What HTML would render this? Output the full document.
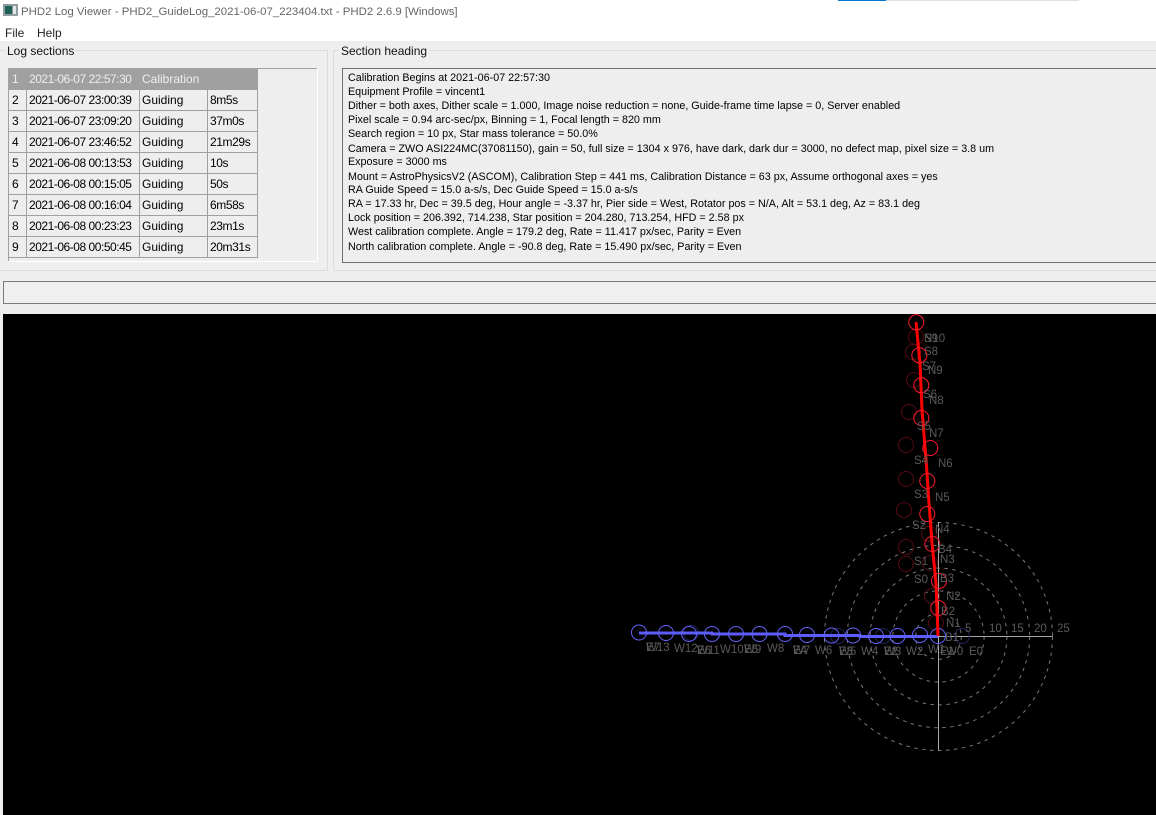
<!DOCTYPE html>
<html><head><meta charset="utf-8"><style>
html,body{margin:0;padding:0}
body{width:1156px;height:815px;position:relative;overflow:hidden;background:#fff;font-family:"Liberation Sans",sans-serif;color:#000}
.a{position:absolute;white-space:nowrap}
#bg{left:0;top:41px;width:1156px;height:774px;background:#eeeeee}
.line{position:absolute}
.cell{position:absolute;font-size:12px;line-height:21px;white-space:nowrap;color:#000;margin-top:1px}
.d{letter-spacing:-.47px}
.m{letter-spacing:-.4px}
.tx{position:absolute;left:348px;font-size:10.75px;line-height:15px;white-space:nowrap;color:#000}
svg text{font-family:"Liberation Sans",sans-serif;font-size:11.5px}
</style></head><body>
<div class="a" style="left:838px;top:0;width:48px;height:1px;background:#0078d7"></div>
<div class="a" style="left:886px;top:0;width:193px;height:1px;background:#e0e0e0"></div>
<svg class="a" style="left:3px;top:3px" width="16" height="14"><rect x="0" y="1" width="15" height="12" fill="#8f9ca0"/><rect x="2" y="3" width="7" height="8" fill="#1f5f55"/><rect x="10" y="3" width="3" height="8" fill="#dfe6e8"/></svg>
<div class="a" style="left:21px;top:4px;font-size:11.43px;line-height:16px;color:#666">PHD2 Log Viewer - PHD2_GuideLog_2021-06-07_223404.txt - PHD2 2.6.9 [Windows]</div>
<div class="a" style="left:5px;top:25px;font-size:12px;line-height:16px;color:#222">File</div>
<div class="a" style="left:37px;top:25px;font-size:12px;line-height:16px;color:#222">Help</div>
<div class="a" id="bg"></div>

<div class="line" style="left:0;top:50px;width:327px;height:1px;background:#dcdcdc"></div>
<div class="line" style="left:327px;top:50px;width:1px;height:221px;background:#dcdcdc"></div>
<div class="line" style="left:0;top:270px;width:328px;height:1px;background:#dcdcdc"></div>
<div class="line" style="left:333px;top:50px;width:823px;height:1px;background:#dcdcdc"></div>
<div class="line" style="left:333px;top:50px;width:1px;height:221px;background:#dcdcdc"></div>
<div class="line" style="left:333px;top:270px;width:823px;height:1px;background:#dcdcdc"></div>
<div class="a" style="left:5px;top:44px;padding:0 2px;background:#eee;font-size:12px;line-height:15px;color:#111">Log sections</div>
<div class="a" style="left:339px;top:44px;padding:0 2px;background:#eee;font-size:12px;line-height:15px;color:#111">Section heading</div>

<div class="line" style="left:8px;top:68px;width:309px;height:1px;background:#a0a0a0"></div>
<div class="line" style="left:8px;top:68px;width:1px;height:194px;background:#a0a0a0"></div>
<div class="line" style="left:8px;top:261px;width:310px;height:1px;background:#fff"></div>
<div class="line" style="left:317px;top:68px;width:1px;height:194px;background:#fff"></div>

<div class="line" style="left:9px;top:69px;width:249px;height:21px;background:#a0a0a0"></div>
<div class="line" style="left:26px;top:90px;width:1px;height:168px;background:#a0a0a0"></div>
<div class="line" style="left:139px;top:90px;width:1px;height:168px;background:#a0a0a0"></div>
<div class="line" style="left:207px;top:90px;width:1px;height:168px;background:#a0a0a0"></div>
<div class="line" style="left:257px;top:90px;width:1px;height:168px;background:#a0a0a0"></div>
<div class="line" style="left:9px;top:110px;width:249px;height:1px;background:#a0a0a0"></div>
<div class="line" style="left:9px;top:131px;width:249px;height:1px;background:#a0a0a0"></div>
<div class="line" style="left:9px;top:152px;width:249px;height:1px;background:#a0a0a0"></div>
<div class="line" style="left:9px;top:173px;width:249px;height:1px;background:#a0a0a0"></div>
<div class="line" style="left:9px;top:194px;width:249px;height:1px;background:#a0a0a0"></div>
<div class="line" style="left:9px;top:215px;width:249px;height:1px;background:#a0a0a0"></div>
<div class="line" style="left:9px;top:236px;width:249px;height:1px;background:#a0a0a0"></div>
<div class="line" style="left:9px;top:257px;width:249px;height:1px;background:#a0a0a0"></div>

<div class="cell" style="left:12px;top:68px;color:#eee">1</div><div class="cell d" style="left:29px;top:68px;color:#eee">2021-06-07 22:57:30</div><div class="cell" style="left:142px;top:68px;color:#eee">Calibration</div>
<div class="cell" style="left:12px;top:89px">2</div><div class="cell d" style="left:29px;top:89px">2021-06-07 23:00:39</div><div class="cell" style="left:142px;top:89px">Guiding</div><div class="cell m" style="left:210px;top:89px">8m5s</div>
<div class="cell" style="left:12px;top:110px">3</div><div class="cell d" style="left:29px;top:110px">2021-06-07 23:09:20</div><div class="cell" style="left:142px;top:110px">Guiding</div><div class="cell m" style="left:210px;top:110px">37m0s</div>
<div class="cell" style="left:12px;top:131px">4</div><div class="cell d" style="left:29px;top:131px">2021-06-07 23:46:52</div><div class="cell" style="left:142px;top:131px">Guiding</div><div class="cell m" style="left:210px;top:131px">21m29s</div>
<div class="cell" style="left:12px;top:152px">5</div><div class="cell d" style="left:29px;top:152px">2021-06-08 00:13:53</div><div class="cell" style="left:142px;top:152px">Guiding</div><div class="cell m" style="left:210px;top:152px">10s</div>
<div class="cell" style="left:12px;top:173px">6</div><div class="cell d" style="left:29px;top:173px">2021-06-08 00:15:05</div><div class="cell" style="left:142px;top:173px">Guiding</div><div class="cell m" style="left:210px;top:173px">50s</div>
<div class="cell" style="left:12px;top:194px">7</div><div class="cell d" style="left:29px;top:194px">2021-06-08 00:16:04</div><div class="cell" style="left:142px;top:194px">Guiding</div><div class="cell m" style="left:210px;top:194px">6m58s</div>
<div class="cell" style="left:12px;top:215px">8</div><div class="cell d" style="left:29px;top:215px">2021-06-08 00:23:23</div><div class="cell" style="left:142px;top:215px">Guiding</div><div class="cell m" style="left:210px;top:215px">23m1s</div>
<div class="cell" style="left:12px;top:236px">9</div><div class="cell d" style="left:29px;top:236px">2021-06-08 00:50:45</div><div class="cell" style="left:142px;top:236px">Guiding</div><div class="cell m" style="left:210px;top:236px">20m31s</div>

<div class="a" style="left:342px;top:68px;width:814px;height:193px;border:1px solid #707070;border-right:none"></div>
<div class="tx" style="top:71px">Calibration Begins at 2021-06-07 22:57:30</div>
<div class="tx" style="top:85px">Equipment Profile = vincent1</div>
<div class="tx" style="top:99px">Dither = both axes, Dither scale = 1.000, Image noise reduction = none, Guide-frame time lapse = 0, Server enabled</div>
<div class="tx" style="top:113px">Pixel scale = 0.94 arc-sec/px, Binning = 1, Focal length = 820 mm</div>
<div class="tx" style="top:127px">Search region = 10 px, Star mass tolerance = 50.0%</div>
<div class="tx" style="top:142px">Camera = ZWO ASI224MC(37081150), gain = 50, full size = 1304 x 976, have dark, dark dur = 3000, no defect map, pixel size = 3.8 um</div>
<div class="tx" style="top:155px">Exposure = 3000 ms</div>
<div class="tx" style="top:170px">Mount = AstroPhysicsV2 (ASCOM), Calibration Step = 441 ms, Calibration Distance = 63 px, Assume orthogonal axes = yes</div>
<div class="tx" style="top:183px">RA Guide Speed = 15.0 a-s/s, Dec Guide Speed = 15.0 a-s/s</div>
<div class="tx" style="top:197px">RA = 17.33 hr, Dec = 39.5 deg, Hour angle = -3.37 hr, Pier side = West, Rotator pos = N/A, Alt = 53.1 deg, Az = 83.1 deg</div>
<div class="tx" style="top:211px">Lock position = 206.392, 714.238, Star position = 204.280, 713.254, HFD = 2.58 px</div>
<div class="tx" style="top:225px">West calibration complete. Angle = 179.2 deg, Rate = 11.417 px/sec, Parity = Even</div>
<div class="tx" style="top:240px">North calibration complete. Angle = -90.8 deg, Rate = 15.490 px/sec, Parity = Even</div>

<div class="a" style="left:3px;top:281px;width:1153px;height:21px;border:1px solid #7a7a7a;border-right:none;background:#efefef"></div>

<svg class="a" style="left:3px;top:314px;background:#000" width="1153" height="501" viewBox="3 314 1153 501">
<g fill="none" stroke="#787878" stroke-dasharray="3.5 4.5">
<circle cx="938.5" cy="636.5" r="22.8"/><circle cx="938.5" cy="636.5" r="45.6"/><circle cx="938.5" cy="636.5" r="68.4"/><circle cx="938.5" cy="636.5" r="91.2"/><circle cx="938.5" cy="636.5" r="114"/>
</g>
<path d="M824 636.5H1052.5M938.5 522V750.5" stroke="#a8a8a8" fill="none"/>
<g fill="none" stroke="#560a14" stroke-width="1">
<circle cx="916" cy="337" r="7.5"/><circle cx="913" cy="352" r="7.5"/><circle cx="914" cy="380" r="7.5"/><circle cx="909" cy="412" r="7.5"/><circle cx="906" cy="445" r="7.5"/><circle cx="906" cy="479" r="7.5"/><circle cx="904" cy="510" r="7.5"/><circle cx="906" cy="547" r="7.5"/><circle cx="906" cy="564" r="7.5"/><circle cx="929" cy="534" r="7.5"/><circle cx="930" cy="563" r="7.5"/><circle cx="932" cy="596" r="7.5"/><circle cx="936" cy="623" r="7.5"/>
</g>
<g fill="none" stroke="#24245a" stroke-width="1">
<circle cx="691" cy="633" r="7.5"/><circle cx="838" cy="636" r="7.5"/><circle cx="883" cy="636" r="7.5"/><circle cx="962" cy="636" r="7.5"/>
</g>
<path d="M639 633H712V634H785V635.5H860V636.5H938" fill="none" stroke="#5c5cff" stroke-width="3"/>
<g fill="none" stroke="#6464ff" stroke-width="1">
<circle cx="639" cy="632.5" r="7.5"/><circle cx="666" cy="633" r="7.5"/><circle cx="689" cy="634" r="7.5"/><circle cx="712" cy="634" r="7.5"/><circle cx="736" cy="634" r="7.5"/><circle cx="759.5" cy="634" r="7.5"/><circle cx="785" cy="634" r="7.5"/><circle cx="807" cy="635" r="7.5"/><circle cx="831.5" cy="635.5" r="7.5"/><circle cx="853" cy="635.5" r="7.5"/><circle cx="876" cy="636" r="7.5"/><circle cx="897.5" cy="636" r="7.5"/><circle cx="920" cy="635" r="7.5"/><circle cx="938" cy="636" r="7.5"/>
</g>
<polyline points="916,322 918,343 920,363 922,410 925,447 927,473 929,503 932,543 936,583 938,636" fill="none" stroke="#ff0000" stroke-width="3"/>
<g fill="none" stroke="#ff1a30" stroke-width="1">
<circle cx="916.3" cy="322.3" r="7.5"/><circle cx="919.3" cy="355.3" r="7.5"/><circle cx="921.3" cy="385.3" r="7.5"/><circle cx="921.3" cy="418" r="7.5"/><circle cx="930.3" cy="448" r="7.5"/><circle cx="927.3" cy="481" r="7.5"/><circle cx="927.3" cy="514" r="7.5"/><circle cx="932.3" cy="544" r="7.5"/><circle cx="939" cy="581" r="7.5"/><circle cx="938.3" cy="608" r="7.5"/>
</g>
<g fill="#5a5a5a">
<text x="924" y="342">S9</text><text x="924" y="342">N10</text><text x="924" y="355">S8</text><text x="922" y="370">S7</text><text x="928" y="374">N9</text><text x="923" y="398">S6</text><text x="929" y="404">N8</text><text x="917" y="430">S5</text><text x="929" y="437">N7</text><text x="914" y="464">S4</text><text x="938" y="467">N6</text><text x="914" y="498">S3</text><text x="935" y="501">N5</text><text x="912" y="529">S2</text><text x="935" y="533">N4</text><text x="938" y="553">B4</text><text x="914" y="565">S1</text><text x="940" y="563">N3</text><text x="914" y="583">S0</text><text x="940" y="582">B3</text><text x="946" y="600">N2</text><text x="941" y="615">B2</text><text x="946" y="627">N1</text><text x="945" y="641">B1</text><text x="965" y="632">5</text>
<text x="989" y="632">10</text><text x="1011" y="632">15</text><text x="1034" y="632">20</text><text x="1057" y="632">25</text>
<text x="646" y="651">E7</text><text x="646" y="651">W13</text><text x="674" y="652">W12</text><text x="697" y="654">E6</text><text x="697" y="654">W11</text><text x="720" y="653">W10</text><text x="744" y="653">E5</text><text x="744" y="653">W9</text><text x="767" y="652">W8</text><text x="793" y="654">E4</text><text x="793" y="654">W7</text><text x="815" y="654">W6</text><text x="839" y="655">E3</text><text x="839" y="655">W5</text><text x="861" y="655">W4</text><text x="884" y="655">E2</text><text x="884" y="655">W3</text><text x="906" y="655">W2</text><text x="928" y="653">W1</text><text x="940" y="655">E1</text><text x="946" y="655">W0</text><text x="969" y="655">E0</text>
</g>
</svg>
</body></html>
